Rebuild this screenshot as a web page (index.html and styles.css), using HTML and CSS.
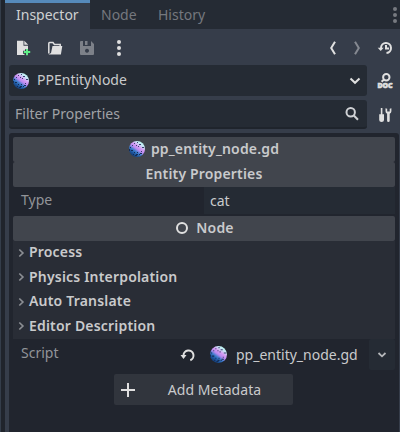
FILE: index.html
```html
<!DOCTYPE html>
<html lang="en">
<head>
<meta charset="utf-8">
<title>Inspector</title>
<link rel="stylesheet" href="styles.css">
</head>
<body>
<svg class="defs" width="0" height="0" aria-hidden="true">
  <defs>
    <linearGradient id="ballfill" x1=".85" y1=".05" x2=".2" y2=".95">
      <stop offset="0" stop-color="#b5fff0"/><stop offset=".2" stop-color="#c8e4f5"/><stop offset=".36" stop-color="#d79cf5"/><stop offset=".52" stop-color="#b88af0"/><stop offset=".66" stop-color="#3f7dcc"/><stop offset=".82" stop-color="#1c559c"/><stop offset="1" stop-color="#143568"/>
    </linearGradient>
    <symbol id="ball" viewBox="0 0 16 16">
      <circle cx="8" cy="8" r="8" fill="url(#ballfill)"/>
      <path d="M5 2h1v1H5zM8 1h1v1H8zM10 3h2v1h-2zM7 4h1v1H7zM3 4h1v1H3zM13 6h2v1h-2zM9 5h1v1H9zM12 10h1v1h-1z" fill="#38406e"/>
      <path d="M1 6h1v1H1zM2 9h2v1H2zM5 11h1v1H5zM7 13h2v1H7zM4 13h1v1H4zM10 13h1v1h-1zM8 11h1v1H8zM0 8h1v2H0zM11 12h2v1h-2zM6 14h2v1H6z" fill="#132c55"/>
    </symbol>
    <symbol id="chev" viewBox="0 0 8 10"><path d="M2.300 1.500 5.900 5 2.300 8.500" fill="none" stroke="currentColor" stroke-width="1.700"/></symbol>
  </defs>
</svg>
<div class="window">
  <div class="gutter"></div>
  <main class="dock">
    <nav class="tabs">
      <span class="tab active">Inspector</span><span class="tab node">Node</span><span class="tab">History</span>
      <svg class="tabmenu" width="4" height="18" viewBox="0 0 4 18" fill="#777a80"><circle cx="2" cy="3" r="2"/><circle cx="2" cy="9" r="2"/><circle cx="2" cy="15" r="2"/></svg>
    </nav>
    <div class="toolbar">
      <svg width="16" height="16" viewBox="0 0 16 16"><path d="M2 .7h6.500v5H13v3.500h-3v1.500H8v3h1.500V15H2zM9.300.7 13.200 4.800H9.300z" fill="#e0e0e0"/><path d="M11 9h2v2h2.200v2H13v2.200h-2V13H8.800v-2H11z" fill="#5fef87"/></svg>
      <svg width="16" height="16" viewBox="0 0 16 16"><path d="M1.800 13.500V3.400Q1.800 2.600 2.600 2.600H6l1.400 1.800h5.800V6" fill="none" stroke="#e0e0e0" stroke-width="1.500"/><path d="M5.500 6h9.800l-1.400 8.400H1.500L4 13z" fill="#e0e0e0"/></svg>
      <svg class="save" width="16" height="16" viewBox="0 0 16 16"><path fill-rule="evenodd" d="M2 1h2v5h8V1l3 3v10q0 1-1 1H2q-1 0-1-1V2q0-1 1-1zM6 1h2.500v4H6zM8 8.800a2 2 0 1 0 .01 0z" fill="#7d8189"/></svg>
      <svg class="dots" width="4" height="16" viewBox="0 0 4 16" fill="#e0e0e0"><circle cx="2" cy="2" r="2"/><circle cx="2" cy="8" r="2"/><circle cx="2" cy="14" r="2"/></svg>
      <svg class="back" width="8" height="16" viewBox="0 0 8 16"><path d="M6 1.700 2.200 8 6 14.300" fill="none" stroke="#e0e0e0" stroke-width="2"/></svg>
      <svg class="next" width="8" height="16" viewBox="0 0 8 16"><path d="M2 1.700 5.800 8 2 14.300" fill="none" stroke="#858991" stroke-width="2"/></svg>
      <svg class="history" width="16" height="16" viewBox="0 0 16 16"><path d="M4 8A5 5 0 1 1 9.500 13M9 5v3.500h3" fill="none" stroke="#e0e0e0" stroke-width="2"/><path d="M.7 7.700h6L3.700 11z" fill="#e0e0e0"/></svg>
    </div>
    <div class="line">
      <div class="field object"><svg width="16" height="16"><use href="#ball"/></svg><span>PPEntityNode</span>
        <svg class="end" width="12" height="10" viewBox="0 0 12 10"><path d="M1.500 2.500 6 6.800l4.500-4.300" fill="none" stroke="#e0e0e0" stroke-width="2"/></svg></div>
      <svg class="help" width="16" height="16" viewBox="0 0 16 16"><circle cx="9.300" cy="4.200" r="3.200" fill="none" stroke="#e0e0e0" stroke-width="2"/><path d="M7 6.500 4.600 8.800" stroke="#e0e0e0" stroke-width="2"/><text class="doc" x=".4" y="15.400" textLength="15.200" lengthAdjust="spacingAndGlyphs">DOC</text></svg>
    </div>
    <div class="line filter">
      <div class="field search"><span>Filter Properties</span>
        <svg class="end" width="14" height="14" viewBox="0 0 14 14"><circle cx="5.700" cy="5.300" r="4.200" fill="none" stroke="#cfd1d4" stroke-width="2"/><path d="m8.800 8.500 4.200 4.300" stroke="#cfd1d4" stroke-width="2"/></svg></div>
      <svg width="16" height="16" viewBox="0 0 16 16"><path d="M3.800 1h1.600v6.300H7V13q0 2-2.400 2T2.200 13V7.300h1.600z" fill="#e0e0e0"/><path d="M8.500 1.300v3q0 1.700 1.600 2.500v7q0 1.200 1.300 1.200t1.300-1.200v-7q1.700-.8 1.700-2.500v-3l-1.700.5v2.600h-2.500V1.800z" fill="#e0e0e0"/></svg>
    </div>
    <section class="properties">
      <h2 class="category"><svg width="16" height="16"><use href="#ball"/></svg><span>pp_entity_node.gd</span></h2>
      <h2 class="category"><span>Entity Properties</span></h2>
      <div class="row type"><label>Type</label><div class="value">cat</div></div>
      <h2 class="category nodehead"><svg width="16" height="16" viewBox="0 0 16 16"><circle cx="8" cy="8" r="5" fill="none" stroke="#e0e0e0" stroke-width="2"/></svg><span>Node</span></h2>
      <div class="groups">
        <div class="group"><svg width="8" height="10"><use href="#chev"/></svg><span>Process</span></div>
        <div class="group"><svg width="8" height="10"><use href="#chev"/></svg><span>Physics Interpolation</span></div>
        <div class="group"><svg width="8" height="10"><use href="#chev"/></svg><span>Auto Translate</span></div>
        <div class="group"><svg width="8" height="10"><use href="#chev"/></svg><span>Editor Description</span></div>
      </div>
      <div class="row script"><label>Script</label>
        <svg class="revert" width="16" height="16" viewBox="0 0 16 16"><path d="M3.500 8.500A5 5 0 1 1 10.300 13.200" fill="none" stroke="#e0e0e0" stroke-width="2"/><path d="M.5 8h6l-3 4z" fill="#e0e0e0"/></svg>
        <div class="resource"><svg width="17" height="17"><use href="#ball"/></svg><span>pp_entity_node.gd</span></div>
        <div class="drop"><svg width="10" height="8" viewBox="0 0 10 8"><path d="M1.500 2 5 5.300 8.500 2" fill="none" stroke="#b5b7ba" stroke-width="1.800"/></svg></div>
      </div>
      <button class="add"><svg width="16" height="16" viewBox="0 0 16 16"><path d="M8 1v14M1 8h14" stroke="#e0e0e0" stroke-width="2"/></svg><span>Add Metadata</span></button>
    </section>
  </main>
</div>
</body>
</html>
```
FILE: styles.css
```css
* { box-sizing: border-box; }
body { margin: 0; overflow: hidden; background: #363d4a; color: #c9cacc; font: 14px/20px "Noto Sans", sans-serif; }
svg { display: block; flex: none; }
.defs { position: absolute; }
.window { display: flex; width: 400px; height: 432px; }
.gutter { width: 5px; background: #20242c; border-left: 1px solid #343d4a; }
.dock { flex: 1; min-width: 0; display: flex; flex-direction: column; }
.tabs { height: 29px; display: flex; background: #252b34; color: #75787e; }
.tab { padding: 5px 11px 0; }
.tab.active { width: 85px; background: #363d4a; border-top: 3px solid #568abb; padding-top: 2px; color: #cfd0d2; }
.tab.node { width: 57px; }
.tabmenu { margin: 6px 3px 0 auto; }
.toolbar { height: 36px; display: flex; align-items: center; padding: 2px 7px 0 10px; }
.toolbar svg + svg { margin-left: 16px; }
.toolbar .dots { margin-left: 22px; }
.toolbar .back { margin-left: auto; }
.toolbar .history { margin-left: 16px; }
.line { height: 31px; display: flex; align-items: center; justify-content: space-between; padding: 0 7px 0 4px; }
.field { width: 358px; height: 31px; display: flex; align-items: center; background: #252b34; border-radius: 3px; }
.object { padding: 0 6px 0 4px; gap: 8px; }
.object span { padding-bottom: 1px; }
.end { margin-left: auto; }
.doc { font: 900 7px "Noto Sans", sans-serif; fill: #e0e0e0; stroke: #e0e0e0; stroke-width: .6px; }
.help { overflow: visible; }
.filter { height: 29px; margin-top: 4px; }
.search { height: 29px; padding: 0 8px 0 6px; color: #a0a2a6; border-bottom: 2px solid #1f242c; }
.properties { flex: 1; margin: 4px 1px 0 4px; padding: 4px 4px 0; background: #21252e; border-radius: 3px 3px 0 0; }
.category { margin: 0; height: 25px; display: flex; align-items: center; justify-content: center; gap: 6px; background: #41454d; border-radius: 2px; font-size: 14px; font-weight: 600; letter-spacing: .16px; }
.category span { padding-bottom: 2px; }
.category svg { margin-bottom: 1px; }
.row { display: flex; align-items: center; }
.row label { color: #929499; padding: 0 0 1px 8px; }
.type { height: 27px; margin-bottom: 2px; }
.value { margin-left: auto; width: 191px; height: 27px; line-height: 28px; padding-left: 6px; background: #252b34; }
.groups { background: #292d36; height: 98px; display: grid; grid-template-rows: repeat(4, 1fr); font-weight: 600; letter-spacing: .19px; }
.group { display: flex; align-items: center; gap: 4px; padding-left: 4px; }
.group span { padding-bottom: 2px; }
.group svg { color: #8b8e93; margin-bottom: 1px; }
.script { height: 31px; }
.script label { width: 167px; padding-bottom: 3px; }
.resource { display: flex; align-items: center; gap: 9px; margin-left: 14px; }
.resource svg { margin-bottom: 1px; }
.drop { width: 26px; height: 31px; margin-left: auto; display: flex; align-items: center; justify-content: center; background: #252b34; border-radius: 2px; }
.add { width: 179px; height: 31px; margin: 4px 0 0 101px; padding: 0 6px; display: flex; align-items: center; border: 0; border-radius: 2px; background: #31353d; color: #c9cacc; font: inherit; }
.add span { flex: 1; text-align: center; padding-left: 6px; letter-spacing: .07px; }
```
